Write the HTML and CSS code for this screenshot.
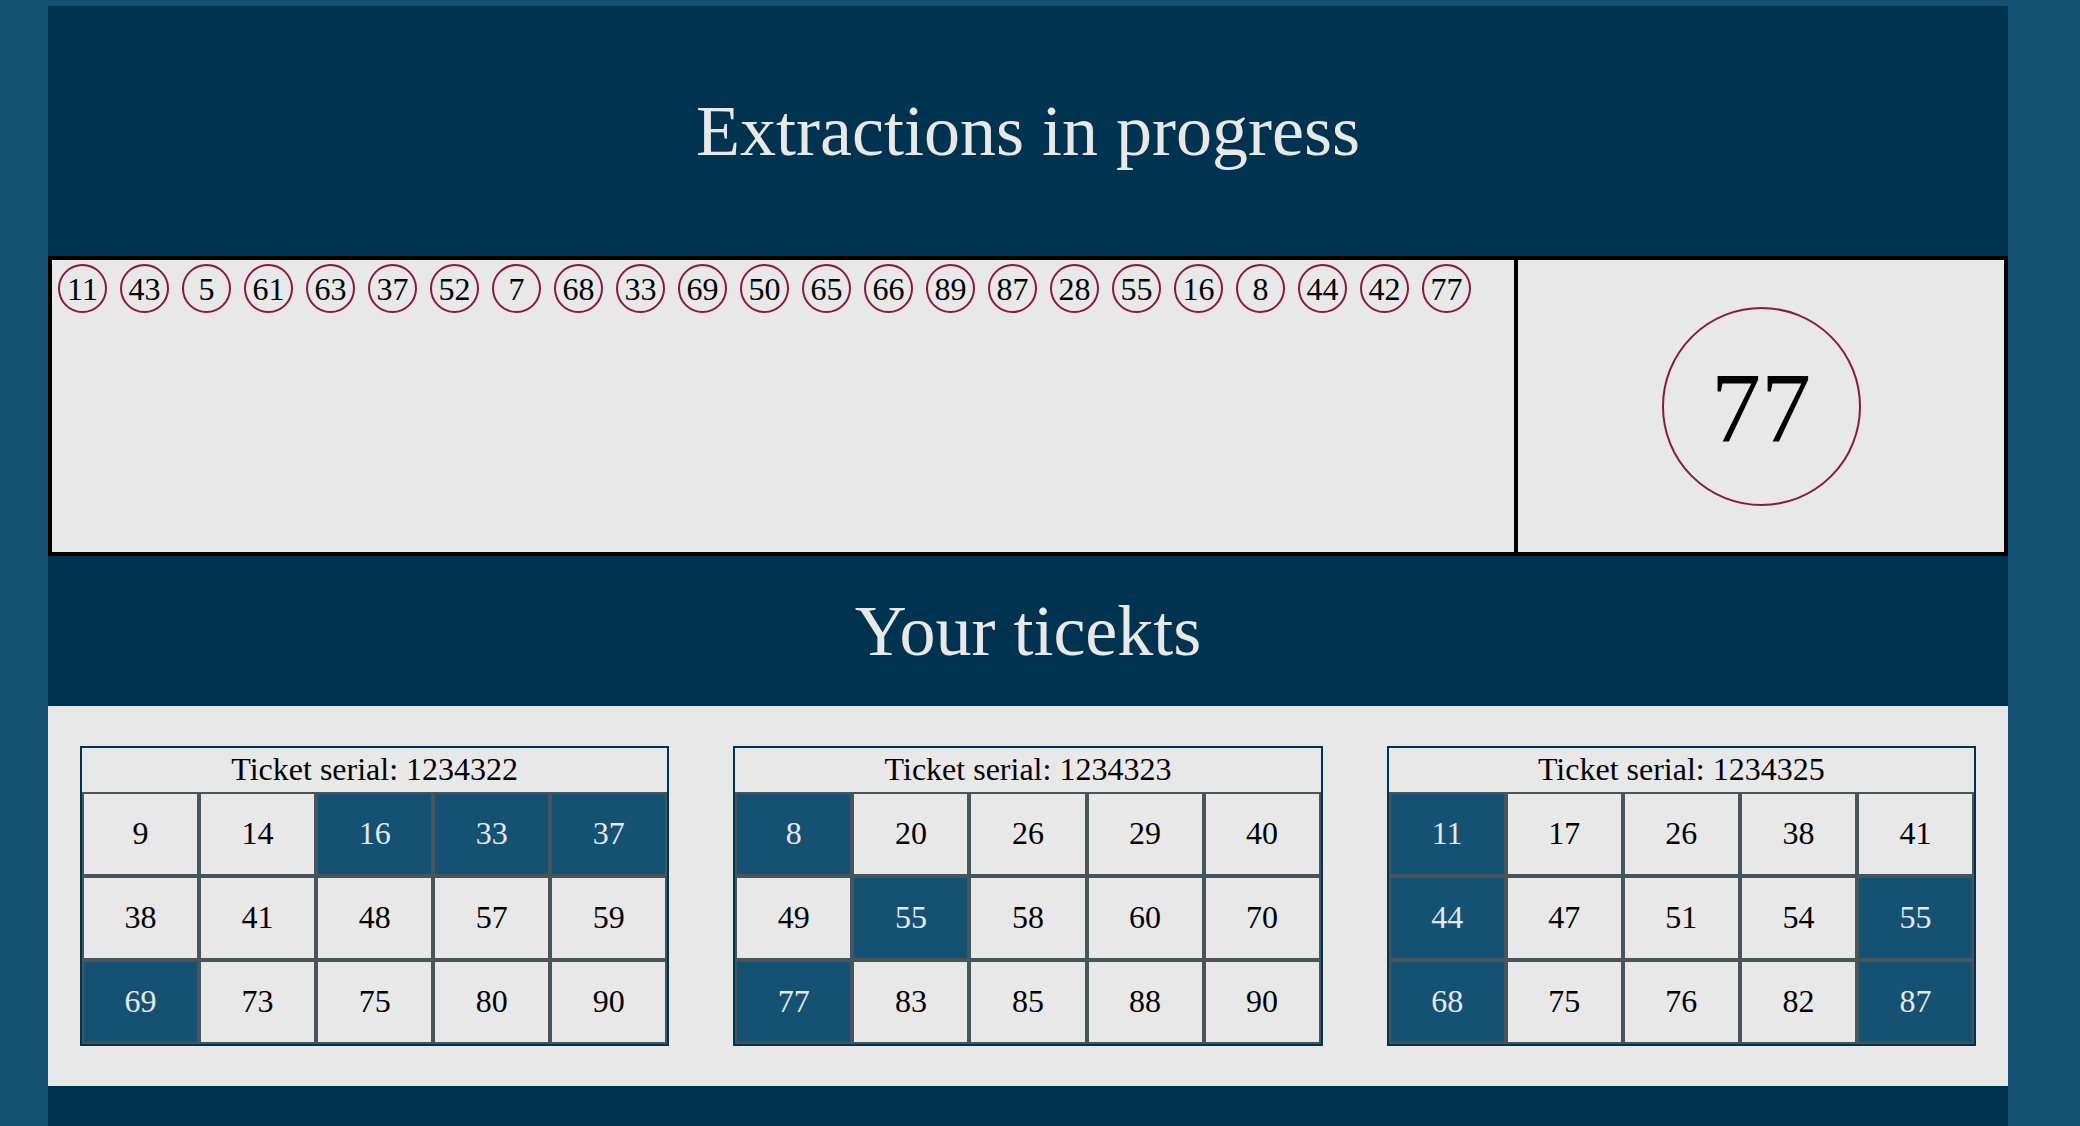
FILE: index.html
```html
<!DOCTYPE html>
<html lang="en">
<head>
<meta charset="utf-8">
<title>Extractions in progress</title>
<link rel="stylesheet" href="styles.css">
</head>
<body>
<div class="page">
  <header class="header">
    <h1 class="title">Extractions in progress</h1>
  </header>
  <section class="board">
    <div class="drawn">
      <span class="ball">11</span><span class="ball">43</span><span class="ball">5</span><span class="ball">61</span><span class="ball">63</span><span class="ball">37</span><span class="ball">52</span><span class="ball">7</span><span class="ball">68</span><span class="ball">33</span><span class="ball">69</span><span class="ball">50</span><span class="ball">65</span><span class="ball">66</span><span class="ball">89</span><span class="ball">87</span><span class="ball">28</span><span class="ball">55</span><span class="ball">16</span><span class="ball">8</span><span class="ball">44</span><span class="ball">42</span><span class="ball">77</span>
    </div>
    <div class="current">
      <span class="big-ball">77</span>
    </div>
  </section>
  <div class="subheader">
    <h2 class="title">Your ticekts</h2>
  </div>
  <section class="tickets">
    <div class="ticket-col">
      <div class="ticket">
        <div class="ticket-head">Ticket serial: 1234322</div>
        <div class="grid">
          <div class="cell">9</div><div class="cell">14</div><div class="cell hit">16</div><div class="cell hit">33</div><div class="cell hit">37</div>
          <div class="cell">38</div><div class="cell">41</div><div class="cell">48</div><div class="cell">57</div><div class="cell">59</div>
          <div class="cell hit">69</div><div class="cell">73</div><div class="cell">75</div><div class="cell">80</div><div class="cell">90</div>
        </div>
      </div>
    </div>
    <div class="ticket-col">
      <div class="ticket">
        <div class="ticket-head">Ticket serial: 1234323</div>
        <div class="grid">
          <div class="cell hit">8</div><div class="cell">20</div><div class="cell">26</div><div class="cell">29</div><div class="cell">40</div>
          <div class="cell">49</div><div class="cell hit">55</div><div class="cell">58</div><div class="cell">60</div><div class="cell">70</div>
          <div class="cell hit">77</div><div class="cell">83</div><div class="cell">85</div><div class="cell">88</div><div class="cell">90</div>
        </div>
      </div>
    </div>
    <div class="ticket-col">
      <div class="ticket">
        <div class="ticket-head">Ticket serial: 1234325</div>
        <div class="grid">
          <div class="cell hit">11</div><div class="cell">17</div><div class="cell">26</div><div class="cell">38</div><div class="cell">41</div>
          <div class="cell hit">44</div><div class="cell">47</div><div class="cell">51</div><div class="cell">54</div><div class="cell hit">55</div>
          <div class="cell hit">68</div><div class="cell">75</div><div class="cell">76</div><div class="cell">82</div><div class="cell hit">87</div>
        </div>
      </div>
    </div>
  </section>
</div>
</body>
</html>
```

FILE: styles.css
```css
html, body {
  margin: 0;
  padding: 0;
}

body {
  background: #155173;
  font-family: "Liberation Serif", "Times New Roman", serif;
  font-size: 32px;
  color: #000;
}

.page {
  margin: 6px 0 0 48px;
  width: 1960px;
  background: #003350;
  padding-bottom: 40px;
}

.title {
  margin: 0;
  font-size: 72px;
  line-height: 80px;
  font-weight: normal;
  color: #e8e8e8;
  text-align: center;
}

.header {
  padding: 85px 0 85px;
}

.board {
  display: flex;
  height: 300px;
  box-sizing: border-box;
  border: 4px solid #000;
  background: #e8e8e8;
}

.drawn {
  flex: 0 0 1466px;
  box-sizing: border-box;
  border-right: 4px solid #000;
  display: flex;
  flex-wrap: wrap;
  align-content: flex-start;
  gap: 13px;
  padding: 4px 0 0 6px;
}

.ball {
  width: 49px;
  height: 49px;
  box-sizing: border-box;
  border: 2px solid #861a40;
  border-radius: 50%;
  display: flex;
  align-items: center;
  justify-content: center;
  line-height: 1;
}

.current {
  flex: 1;
  display: flex;
  align-items: center;
  justify-content: center;
}

.big-ball {
  width: 199px;
  height: 199px;
  box-sizing: border-box;
  border: 2px solid #861a40;
  border-radius: 50%;
  display: flex;
  align-items: center;
  justify-content: center;
  font-size: 100px;
  line-height: 1;
  padding-top: 4px;
}

.subheader {
  padding: 35px 0 35px;
}

.tickets {
  background: #e8e8e8;
  display: grid;
  grid-template-columns: repeat(3, 1fr);
  padding: 40px 0;
}

.ticket-col {
  padding: 0 32px;
}

.ticket {
  border: 2px solid #003350;
}

.ticket-head {
  height: 44px;
  line-height: 42px;
  text-align: center;
}

.grid {
  display: grid;
  grid-template-columns: repeat(5, 1fr);
}

.cell {
  height: 84px;
  box-sizing: border-box;
  border: 2px solid #46545c;
  display: flex;
  align-items: center;
  justify-content: center;
  padding-bottom: 2px;
}

.cell.hit {
  background: #155173;
  color: #e8e8e8;
}
```
